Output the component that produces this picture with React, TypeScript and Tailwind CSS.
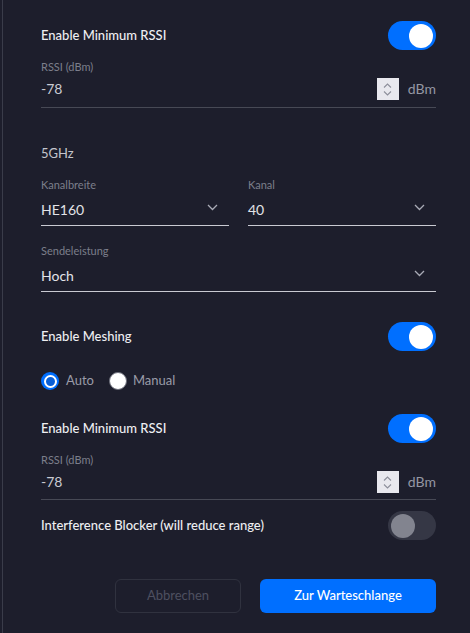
import { type ReactNode } from "react";

function Toggle({ on }: { on: boolean }) {
  return (
    <div
      className={`flex h-[29px] w-[48px] shrink-0 items-center rounded-full px-[3px] ${on ? "justify-end bg-[#006fff]" : "justify-start bg-[#353745]"}`}
    >
      <div
        className={`h-[24px] w-[24px] rounded-full ${on ? "bg-white" : "bg-[#82848f]"}`}
      />
    </div>
  );
}

function ToggleRow({ label, on }: { label: string; on: boolean }) {
  return (
    <div className="flex h-[29px] items-center justify-between">
      <span className="text-[13px] font-medium text-[#eeeef2]">{label}</span>
      <Toggle on={on} />
    </div>
  );
}

function FieldLabel({ children }: { children: ReactNode }) {
  return (
    <p className="h-[14px] text-[11px] leading-[14px] text-[#7c7e8b]">{children}</p>
  );
}

function Chevron() {
  return (
    <svg width="11" height="7" viewBox="0 0 11 7" className="mb-[5px] mr-[11px] text-[#a9abb6]">
      <path d="M1 1 5.5 5.5 10 1" fill="none" stroke="currentColor" strokeWidth="1.3" />
    </svg>
  );
}

function Spinner() {
  return (
    <div className="flex h-[22px] w-[22px] flex-col items-center justify-center gap-[3px] bg-[#e8e8ee]">
      <svg width="9" height="5" viewBox="0 0 9 5" className="text-[#8d8f9b]">
        <path d="M1 4.5 4.5 1 8 4.5" fill="none" stroke="currentColor" strokeWidth="1.1" />
      </svg>
      <svg width="9" height="5" viewBox="0 0 9 5" className="text-[#8d8f9b]">
        <path d="M1 0.5 4.5 4 8 0.5" fill="none" stroke="currentColor" strokeWidth="1.1" />
      </svg>
    </div>
  );
}

function RssiField({ pb }: { pb: string }) {
  return (
    <>
      <div className="mt-[10px]">
        <FieldLabel>RSSI (dBm)</FieldLabel>
      </div>
      <div
        className={`mt-[4px] flex items-start justify-between border-b border-[#474955] ${pb}`}
      >
        <span className="h-[22px] text-[14px] leading-[22px] text-[#c9cad2]">-78</span>
        <div className="flex items-center gap-[9px]">
          <Spinner />
          <span className="text-[14px] leading-[22px] text-[#9597a3]">dBm</span>
        </div>
      </div>
    </>
  );
}

function Select({ label, value, className = "" }: { label: string; value: string; className?: string }) {
  return (
    <div className={className}>
      <FieldLabel>{label}</FieldLabel>
      <div className="mt-[7px] flex items-center justify-between border-b border-[#c9cad2] pb-[4px]">
        <span className="h-[22px] text-[14px] leading-[22px] text-[#e2e3e8]">{value}</span>
        <Chevron />
      </div>
    </div>
  );
}

export default function App() {
  return (
    <div className="h-[633px] w-full bg-[#1d1e2c] pl-[2px] font-['Lato','Liberation_Sans',sans-serif]">
      <div className="flex h-full flex-col border-l border-[#3a3c4a] pl-[38px] pr-[34px] pt-[21px]">
        <ToggleRow label="Enable Minimum RSSI" on />
        <RssiField pb="pb-[7px]" />

        <p className="mt-[36px] h-[18px] text-[13px] leading-[18px] text-[#c4c5cd]">5GHz</p>

        <div className="mt-[16px] flex gap-[19px]">
          <Select label="Kanalbreite" value="HE160" className="flex-1" />
          <Select label="Kanal" value="40" className="flex-1" />
        </div>
        <Select label="Sendeleistung" value="Hoch" className="mt-[18px]" />

        <div className="mt-[30px]">
          <ToggleRow label="Enable Meshing" on />
        </div>

        <div className="mt-[21px] flex h-[18px] items-center text-[13px] text-[#9a9ca8]">
          <div className="flex h-[18px] w-[18px] items-center justify-center rounded-full bg-[#006fff]">
            <div className="h-[13px] w-[13px] rounded-full border-2 border-white bg-[#0a5fd6]" />
          </div>
          <span className="ml-[7px]">Auto</span>
          <div className="ml-[15px] h-[18px] w-[18px] rounded-full border-[1.5px] border-[#6c6e7a] bg-white" />
          <span className="ml-[6px]">Manual</span>
        </div>

        <div className="mt-[24px]">
          <ToggleRow label="Enable Minimum RSSI" on />
        </div>
        <RssiField pb="pb-[6px]" />

        <div className="mt-[11px]">
          <ToggleRow label="Interference Blocker (will reduce range)" on={false} />
        </div>

        <div className="mt-[39px] flex justify-end gap-[19px]">
          <button className="h-[34px] w-[126px] rounded-[6px] border border-[#30323f] text-[13px] text-[#4e5060]">
            Abbrechen
          </button>
          <button className="h-[34px] w-[176px] rounded-[6px] bg-[#006fff] text-[13px] font-medium text-white">
            Zur Warteschlange
          </button>
        </div>
      </div>
    </div>
  );
}
